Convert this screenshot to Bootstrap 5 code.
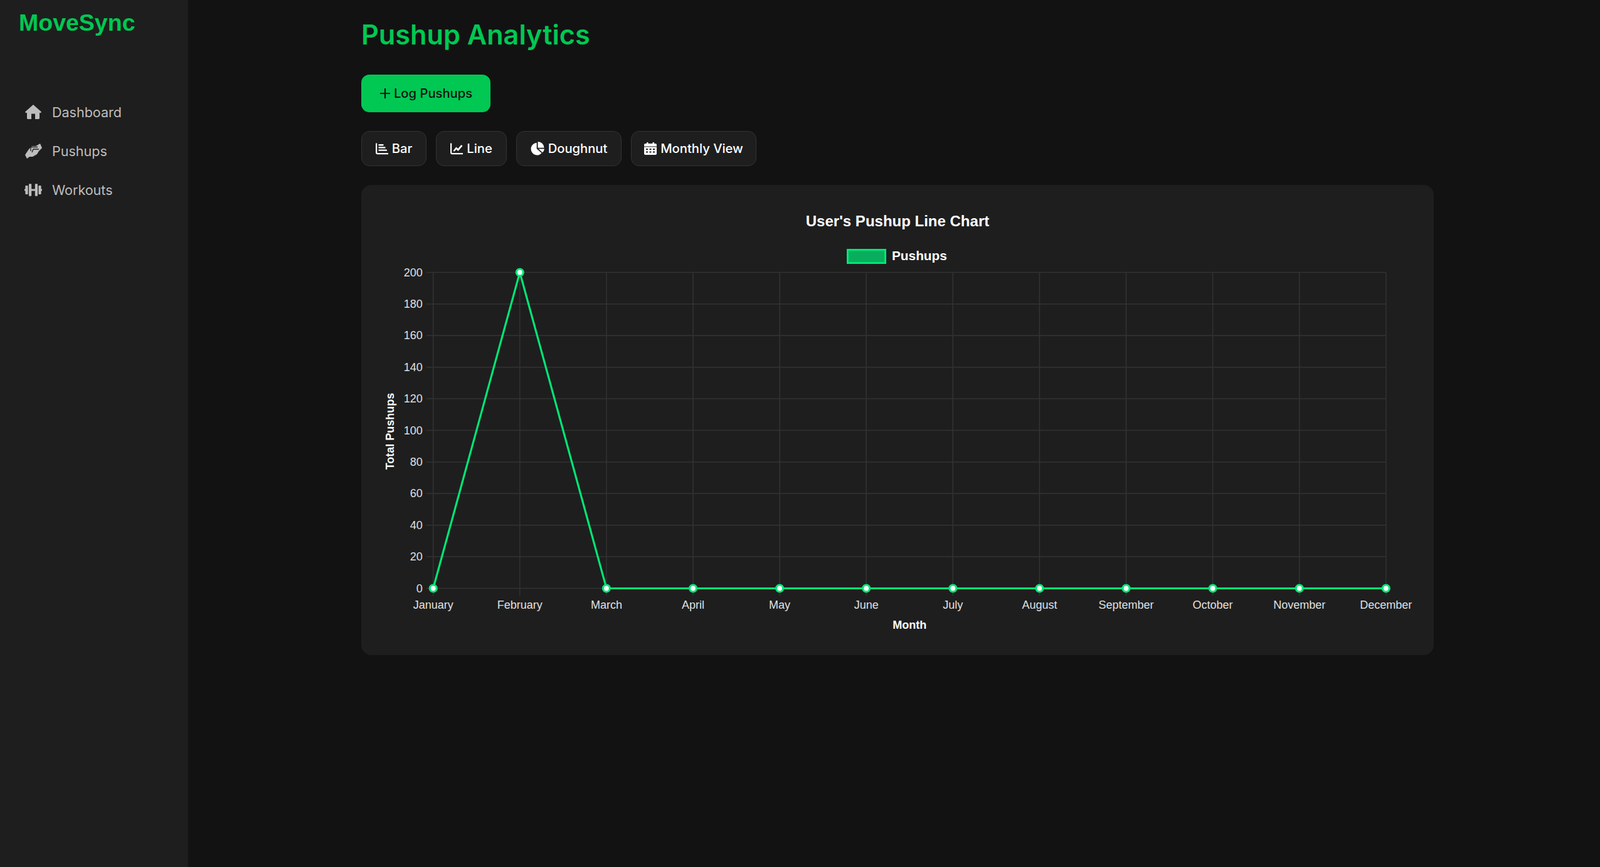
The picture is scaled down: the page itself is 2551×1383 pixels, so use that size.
<!DOCTYPE html>
<html lang="en">
<head>
    <meta charset="UTF-8">
    <meta name="viewport" content="width=device-width, initial-scale=1.0">
    <title>MoveSync - Pushup Analytics</title>
    <link href="https://cdn.jsdelivr.net/npm/bootstrap@5.3.0/dist/css/bootstrap.min.css" rel="stylesheet">
    <style>
        body { background-color: #121212; font-family: Inter, "Liberation Sans", sans-serif; min-height: 100vh; }
        .side-bar { width: 300px; min-height: 100vh; background-color: #1e1e1e; flex-shrink: 0; }
        .brand-name { color: #00c853; font-family: "Liberation Sans", sans-serif; font-size: 37.500px; font-weight: 700; line-height: 44px; padding: 14px 0 0 30px; margin-bottom: 101.500px; }
        .side-bar .nav { padding-left: 39px; gap: 24px; }
        .side-link { color: #bdbdbd; font-size: 21.500px; line-height: 38px; padding: 0; display: flex; align-items: center; gap: 16px; }
        .side-link:hover { color: #fff; }
        .side-link svg { width: 28px; height: 26px; fill: currentColor; flex-shrink: 0; }
        .main-area { padding: 0 265px 0 276px; flex-grow: 1; min-width: 0; }
        .page-title { color: #00c853; font-size: 43.200px; font-weight: 600; line-height: 50px; margin: 30px 0 39px; }
        .log-btn { background-color: #00c853; color: #121212; border: 0; border-radius: 13px; width: 206px; height: 60px; font-size: 20.200px; font-weight: 500; padding: 0; display: flex; align-items: center; justify-content: center; gap: 5px; }
        .log-btn:hover { background-color: #00b84c; color: #121212; }
        .log-btn svg { width: 18px; height: 18px; stroke: currentColor; stroke-width: 2.200; fill: none; }
        .filter-row { gap: 15px; margin: 30px 0; }
        .filter-btn { background-color: #1e1e1e; color: #fff; border: 1px solid #333; border-radius: 13px; height: 56px; font-size: 20.200px; font-weight: 500; padding: 0; display: flex; align-items: center; justify-content: center; gap: 6px; }
        .filter-btn:hover { background-color: #2a2a2a; color: #fff; border-color: #333; }
        .filter-btn svg { width: 20px; height: 20px; fill: currentColor; }
        .filter-btn .pie-icon { width: 22px; height: 22px; }
        .btn-bar { width: 104px; }
        .btn-line { width: 113px; }
        .btn-dough { width: 168px; }
        .btn-month { width: 200px; }
        .chart-card { background-color: #1e1e1e; border: 0; border-radius: 16px; height: 750px; padding: 32px; }
        #chart { display: block; width: 1646px; height: 686px; font-family: "Liberation Sans", sans-serif; }
    </style>
</head>
<body>
    <div class="d-flex">
        <!-- Sidebar -->
        <aside class="side-bar">
            <div class="brand-name">MoveSync</div>
            <nav class="nav flex-column">
                <a class="nav-link side-link" href="#">
                    <svg viewBox="0 0 28 26"><path d="M14 1L27 12.500 25.500 14.500 24 13.500V22.500C24 23.300 23.300 24 22.500 24H17V15.500H11V24H5.500C4.700 24 4 23.300 4 22.500V13.500L2.500 14.500 1 12.500Z"/></svg>
                    Dashboard
                </a>
                <a class="nav-link side-link" href="#">
                    <svg viewBox="0 0 28 26"><path d="M1 19L7 10L12 5H18L25 1L28 8L23 13L20 18L13 22H8L4 25Z"/><path d="M10 13V6.500H21M23 10H14L12 15" fill="none" stroke="#1e1e1e" stroke-width="1.300"/></svg>
                    Pushups
                </a>
                <a class="nav-link side-link" href="#">
                    <svg viewBox="0 0 640 512"><path d="M104 96H56c-13.3 0-24 10.7-24 24v104H8c-4.4 0-8 3.6-8 8v48c0 4.4 3.6 8 8 8h24v104c0 13.3 10.7 24 24 24h48c13.3 0 24-10.7 24-24V120c0-13.3-10.7-24-24-24zm528 128h-24V120c0-13.3-10.7-24-24-24h-48c-13.3 0-24 10.7-24 24v272c0 13.3 10.7 24 24 24h48c13.3 0 24-10.7 24-24V288h24c4.4 0 8-3.6 8-8v-48c0-4.4-3.6-8-8-8zM456 32h-48c-13.3 0-24 10.7-24 24v168H256V56c0-13.3-10.7-24-24-24h-48c-13.3 0-24 10.7-24 24v400c0 13.3 10.7 24 24 24h48c13.3 0 24-10.7 24-24V288h128v168c0 13.3 10.7 24 24 24h48c13.3 0 24-10.7 24-24V56c0-13.3-10.7-24-24-24z"/></svg>
                    Workouts
                </a>
            </nav>
        </aside>

        <!-- Contenido -->
        <main class="main-area">
            <h1 class="page-title">Pushup Analytics</h1>
            <button class="btn log-btn" type="button">
                <svg viewBox="0 0 18 18"><path d="M9 1V17M1 9H17"/></svg>
                Log Pushups
            </button>

            <div class="d-flex filter-row">
                <button class="btn filter-btn btn-bar" type="button">
                    <svg viewBox="0 0 20 20"><path d="M0 1.500h2.200V16c0 .6.4 1 1 1H20v2.200H3C1.300 19.200 0 17.900 0 16.200z"/><rect x="4.500" y="3" width="8" height="2.400" rx=".6"/><rect x="4.500" y="7.200" width="11" height="2.400" rx=".6"/><rect x="4.500" y="11.400" width="13.500" height="2.400" rx=".6"/></svg>
                    Bar
                </button>
                <button class="btn filter-btn btn-line" type="button">
                    <svg viewBox="0 0 20 20"><path d="M0 1.500h2.200V16c0 .6.4 1 1 1H20v2.200H3C1.300 19.200 0 17.900 0 16.200z"/><path d="M4.500 13.500l4.800-6 3 2.600L17.500 4l2 1.700-7 8.300-3-2.700-3 3.500z"/></svg>
                    Line
                </button>
                <button class="btn filter-btn btn-dough" type="button">
                    <svg class="pie-icon" viewBox="0 0 20 20"><path d="M8.800 1.500a9 9 0 1 0 7.200 15.200l-7.200-6.400z"/><path d="M10.500 0a9 9 0 0 1 9 8.800h-9z"/><path d="M11.500 10.500H20a9 9 0 0 1-2.800 5.200z"/></svg>
                    Doughnut
                </button>
                <button class="btn filter-btn btn-month" type="button">
                    <svg viewBox="0 0 20 20"><path fill-rule="evenodd" d="M4 0h2.500v2h7V0H16v2h2c1.100 0 2 .9 2 2v2.500H0V4c0-1.100.9-2 2-2h2zM0 7.500h20V18c0 1.100-.9 2-2 2H2c-1.100 0-2-.9-2-2zM3 10v2h3v-2zm5.500 0v2h3v-2zm5.500 0v2h3v-2zM3 14.500v2h3v-2zm5.500 0v2h3v-2zm5.500 0v2h3v-2z"/></svg>
                    Monthly View
                </button>
            </div>

            <div class="card chart-card">
                <svg id="chart" viewBox="0 0 1646 686"></svg>
            </div>
        </main>
    </div>

    <script src="https://cdn.jsdelivr.net/npm/bootstrap@5.3.0/dist/js/bootstrap.bundle.min.js"></script>
    <script>
        const months = ["January", "February", "March", "April", "May", "June", "July", "August", "September", "October", "November", "December"];
        const values = [0, 200, 0, 0, 0, 0, 0, 0, 0, 0, 0, 0];
        const left = 82.7, top_ = 107.5, stepX = 138.1, plotH = 504;
        const right = left + stepX * 11, bottom = top_ + plotH;
        const x = i => left + stepX * i;
        const y = v => bottom - v / 200 * plotH;
        let out = "";

        const text = (tx, ty, str, size, anchor, extra = "") =>
            `<text x="${tx}" y="${ty}" font-size="${size}" text-anchor="${anchor}" dominant-baseline="central" ${extra}>${str}</text>`;

        for (let v = 0; v <= 200; v += 20) {
            out += `<line x1="${left - 11}" x2="${right}" y1="${y(v)}" y2="${y(v)}" stroke="#333" stroke-width="1.500"/>`;
            out += text(left - 17, y(v), v, 18, "end", 'fill="#e0e0e0"');
        }
        months.forEach((m, i) => {
            out += `<line x1="${x(i)}" x2="${x(i)}" y1="${top_}" y2="${bottom + 12}" stroke="#333" stroke-width="1.500"/>`;
            out += text(x(i), bottom + 26, m, 18, "middle", 'fill="#e0e0e0"');
        });

        out += text(823, 25.5, "User's Pushup Line Chart", 24, "middle", 'fill="#fff" font-weight="700"');
        out += `<rect x="743.5" y="71.5" width="60" height="21" fill="#00e676" fill-opacity=".72" stroke="#00e676" stroke-width="3"/>`;
        out += text(814, 80.5, "Pushups", 20.8, "start", 'fill="#fff" font-weight="700"');
        out += text((left + right) / 2, 669.5, "Month", 18, "middle", 'fill="#fff" font-weight="700"');
        out += text(0, 0, "Total Pushups", 18, "middle", 'fill="#fff" font-weight="700" transform="translate(13.500 361) rotate(-90)"');

        out += `<polyline fill="none" stroke="#00e676" stroke-width="3.200" points="${values.map((v, i) => x(i) + "," + y(v)).join(" ")}"/>`;
        values.forEach((v, i) => {
            out += `<circle cx="${x(i)}" cy="${y(v)}" r="5.500" fill="#fff" stroke="#00e676" stroke-width="3.200"/>`;
        });
        document.getElementById("chart").innerHTML = out;
    </script>
</body>
</html>
